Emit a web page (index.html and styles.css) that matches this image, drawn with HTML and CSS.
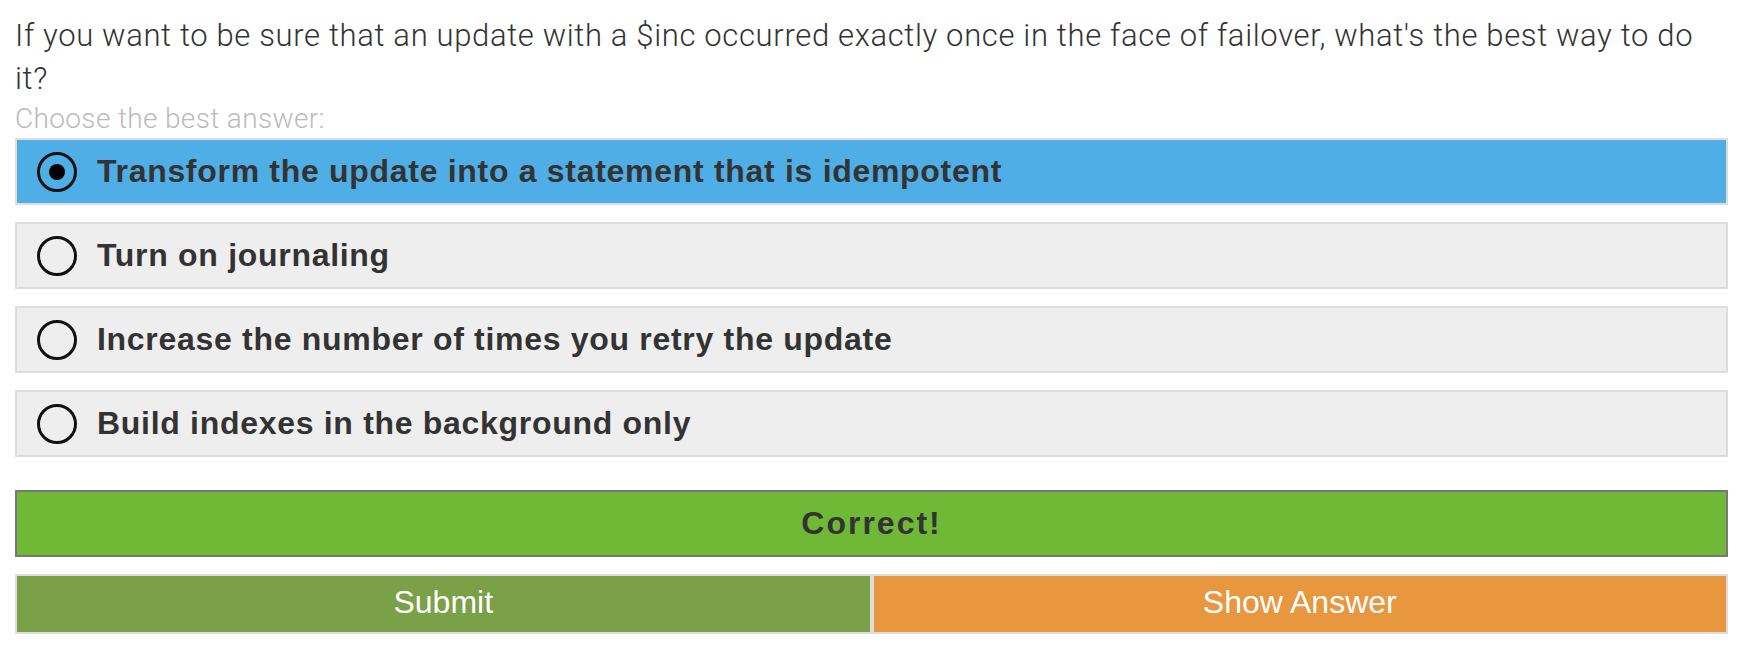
FILE: index.html
```html
<!DOCTYPE html>
<html lang="en">
<head>
<meta charset="utf-8">
<title>Quiz</title>
<link rel="stylesheet" href="styles.css">
</head>
<body>
<div class="quiz">
  <p class="question">If you want to be sure that an update with a $inc occurred exactly once in the face of failover, what's the best way to do it?</p>
  <p class="hint">Choose the best answer:</p>
  <ul class="options">
    <li class="option selected"><span class="radio"></span><span class="label">Transform the update into a statement that is idempotent</span></li>
    <li class="option"><span class="radio"></span><span class="label">Turn on journaling</span></li>
    <li class="option"><span class="radio"></span><span class="label">Increase the number of times you retry the update</span></li>
    <li class="option"><span class="radio"></span><span class="label">Build indexes in the background only</span></li>
  </ul>
  <div class="result">Correct!</div>
  <div class="actions">
    <button class="btn submit">Submit</button>
    <button class="btn show">Show Answer</button>
  </div>
</div>
</body>
</html>
```

FILE: styles.css
```css
body {
  margin: 0;
  background: #fff;
  color: #333;
  font-family: "Liberation Sans", Arial, sans-serif;
}

.quiz {
  display: flex;
  flex-direction: column;
  padding: 14px 28px 0 15px;
}

.question {
  margin: 0;
  padding-right: 12px;
  font-family: Roboto, "Liberation Sans", sans-serif;
  font-weight: 300;
  font-size: 31px;
  letter-spacing: 0.65px;
  line-height: 43px;
  color: #333;
}

.hint {
  margin: 0;
  font-family: Roboto, "Liberation Sans", sans-serif;
  font-weight: 300;
  font-size: 28px;
  letter-spacing: 0.35px;
  line-height: 38px;
  color: #bbb;
}

.options {
  list-style: none;
  margin: 0;
  padding: 0;
  display: flex;
  flex-direction: column;
  gap: 17px;
}

.option {
  box-sizing: border-box;
  height: 67px;
  border: 2px solid #ddd;
  background: #eee;
  display: flex;
  align-items: center;
  gap: 20px;
  padding-left: 20px;
  font-weight: bold;
  font-size: 32px;
  letter-spacing: 0.7px;
  color: #333;
}

.option.selected {
  background: #4faee6;
}

.radio {
  box-sizing: border-box;
  flex: none;
  width: 40px;
  height: 40px;
  border: 3.5px solid #111;
  border-radius: 50%;
  display: flex;
  align-items: center;
  justify-content: center;
}

.selected .radio::after {
  content: "";
  width: 16px;
  height: 16px;
  border-radius: 50%;
  background: #000;
}

.result {
  box-sizing: border-box;
  margin-top: 33px;
  height: 67px;
  border: 2px solid #777;
  background: #6fb937;
  display: flex;
  align-items: center;
  justify-content: center;
  font-weight: bold;
  font-size: 32px;
  letter-spacing: 2px;
  color: #333;
}

.actions {
  margin-top: 17px;
  display: flex;
  height: 60px;
}

.btn {
  flex: 1;
  box-sizing: border-box;
  margin: 0;
  border: 2px solid #ddd;
  color: #fff;
  font-family: "Liberation Sans", Arial, sans-serif;
  font-size: 32px;
  padding: 0 0 4px;
}

.submit {
  background: #7aa048;
}

.show {
  background: #e8973f;
}
```
